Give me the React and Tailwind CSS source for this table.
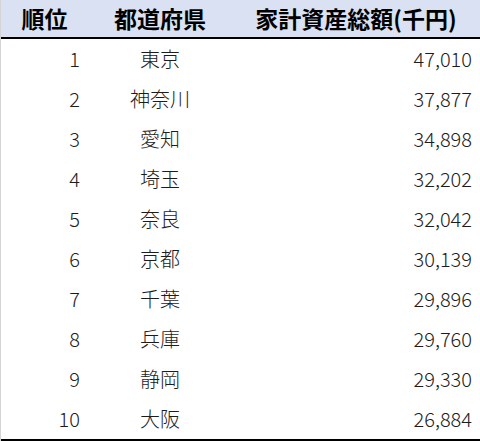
import React from "react";

const rows = [
  [1, "東京", "47,010"],
  [2, "神奈川", "37,877"],
  [3, "愛知", "34,898"],
  [4, "埼玉", "32,202"],
  [5, "奈良", "32,042"],
  [6, "京都", "30,139"],
  [7, "千葉", "29,896"],
  [8, "兵庫", "29,760"],
  [9, "静岡", "29,330"],
  [10, "大阪", "26,884"],
];

export default function App() {
  return (
    <div
      className="w-[480px] h-[441px] bg-white border-l border-[#d4d4d4] overflow-hidden"
      style={{ fontFamily: '"Noto Sans CJK JP", sans-serif' }}
    >
      <div className="grid grid-cols-[87px_144px_248px] h-[39px] bg-[#d9e1f2] border-b-[2px] border-black items-center text-[23px] font-bold text-black leading-none">
        <div className="text-center">順位</div>
        <div className="text-center">都道府県</div>
        <div className="text-center">家計資産総額(千円)</div>
      </div>
      <div className="border-b-[2px] border-black">
        {rows.map(([r, p, v]) => (
          <div
            key={r}
            className="grid grid-cols-[87px_144px_248px] h-[40px] items-center text-[20px] font-light text-[#1c1c1c] leading-none"
          >
            <div className="text-right pr-[8px]">{r}</div>
            <div className="text-center">{p}</div>
            <div className="text-right pr-[8px]">{v}</div>
          </div>
        ))}
      </div>
    </div>
  );
}
